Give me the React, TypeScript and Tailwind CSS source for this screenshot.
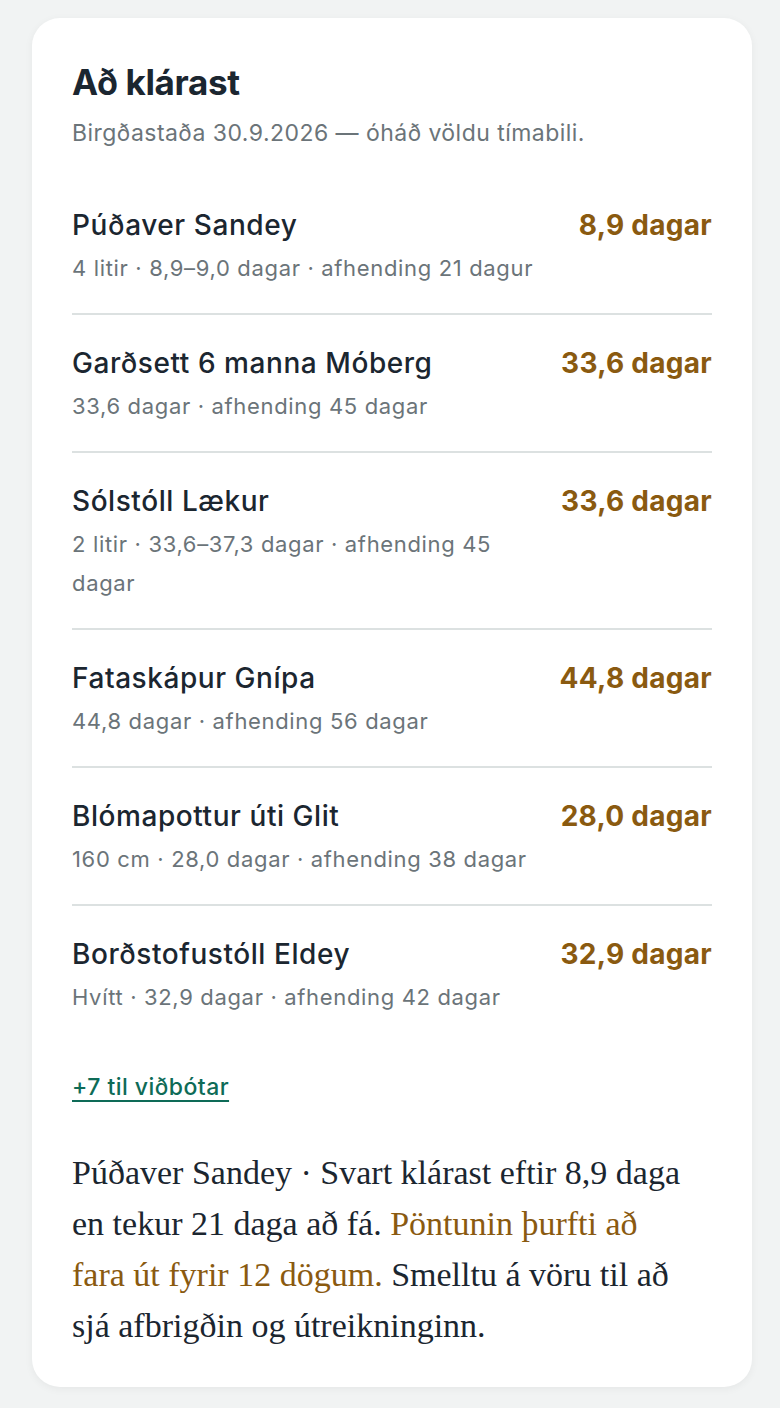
export default function App() {
  const items = [
    { name: "Púðaver Sandey", info: "4 litir · 8,9–9,0 dagar · afhending 21 dagur", days: "8,9 dagar" },
    { name: "Garðsett 6 manna Móberg", info: "33,6 dagar · afhending 45 dagar", days: "33,6 dagar" },
    { name: "Sólstóll Lækur", info: "2 litir · 33,6–37,3 dagar · afhending 45 dagar", days: "33,6 dagar" },
    { name: "Fataskápur Gnípa", info: "44,8 dagar · afhending 56 dagar", days: "44,8 dagar" },
    { name: "Blómapottur úti Glit", info: "160 cm · 28,0 dagar · afhending 38 dagar", days: "28,0 dagar" },
    { name: "Borðstofustóll Eldey", info: "Hvítt · 32,9 dagar · afhending 42 dagar", days: "32,9 dagar" }
  ];

  return (
    <div className="min-h-[1408px] bg-[#f1f3f3] pt-[18px] pb-5 pl-8 font-['Inter',sans-serif]">
      <section className="w-[720px] rounded-[28px] bg-white px-10 pt-[44px] pb-9 shadow-[0_2px_8px_rgba(0,0,0,0.05)]">
        {/* Header */}
        <h2 className="text-[35px] leading-10 font-bold tracking-[-0.01em] text-[#1b2630]">
          Að klárast
        </h2>
        <p className="mt-[15px] text-[23px] leading-8 tracking-[0.02em] text-[#6b7479]">
          Birgðastaða 30.9.2026 — óháð völdu tímabili.
        </p>

        {/* Items */}
        <ul className="mt-7">
          {items.map((item, index) => (
            <li
              key={index}
              className={`flex items-start gap-6 pt-7 pb-[25px] ${
                index < items.length - 1 ? "border-b-2 border-[#dce1e1]" : ""
              }`}
            >
              <div className="min-w-0 flex-1">
                <div className="text-[28px] leading-10 font-medium tracking-[0.02em] text-[#1b2630]">
                  {item.name}
                </div>
                <div className="mt-1 text-[22px] leading-[39px] tracking-[0.03em] text-[#6b7479]">
                  {item.info}
                </div>
              </div>
              <div className="shrink-0 text-[28px] leading-10 font-bold tracking-[0.01em] text-[#8a5a10]">
                {item.days}
              </div>
            </li>
          ))}
        </ul>

        <a
          href="#"
          className="mt-[30px] inline-block text-[23px] leading-[30px] font-medium tracking-[0.02em] text-[#0e6b57] underline decoration-2 underline-offset-[5px]"
        >
          +7 til viðbótar
        </a>

        {/* Summary */}
        <p className="mt-[45px] font-['Liberation_Serif',serif] text-[34px] leading-[51px] text-[#1b2630]">
          Púðaver Sandey · Svart klárast eftir 8,9 daga
          <br />
          en tekur 21 daga að fá.{" "}
          <span className="text-[#8a5a10]">
            Pöntunin þurfti að
            <br />
            fara út fyrir 12 dögum.
          </span>{" "}
          Smelltu á vöru til að
          <br />
          sjá afbrigðin og útreikninginn.
        </p>
      </section>
    </div>
  );
}
